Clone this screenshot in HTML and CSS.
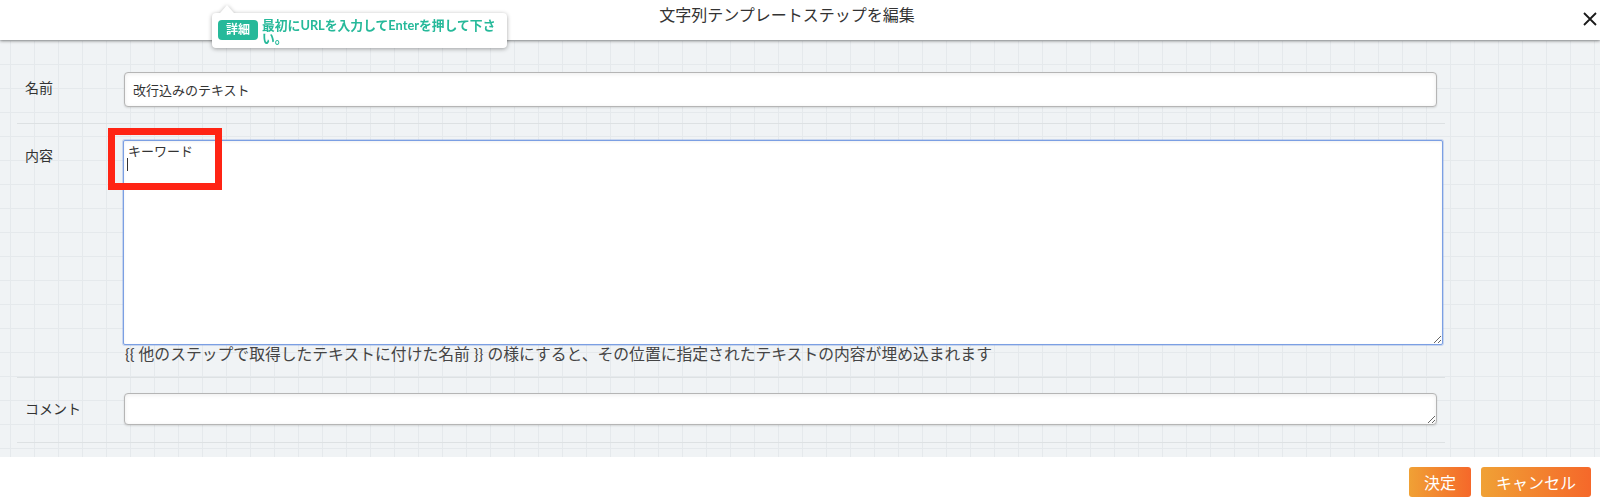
FILE: index.html
```html
<!DOCTYPE html>
<html lang="ja">
<head>
  <meta charset="UTF-8" />
  <title>文字列テンプレートステップを編集</title>
  <link rel="stylesheet" href="styles.css">
</head>
<body>
  <!-- Dialog header -->
  <header class="dialog-header">
    <div class="dialog-title">文字列テンプレートステップを編集</div>
    <button type="button" class="close-button">
      <svg width="14" height="14" viewBox="0 0 14 14"><path d="M1 1L13 13M13 1L1 13" stroke="#1a1a1a" stroke-width="1.8" fill="none"/></svg>
    </button>
  </header>

  <!-- Hint bubble -->
  <div class="tip">
    <span class="tip-badge">詳細</span>
    <span class="tip-text">最初にURLを入力してEnterを押して下さ<br>い。</span>
  </div>

  <!-- Form body -->
  <main class="dialog-body">
    <div class="form">
      <div class="form-row row-name">
        <label class="form-label">名前</label>
        <div class="form-field">
          <input type="text" class="form-control" value="改行込みのテキスト">
        </div>
      </div>

      <div class="form-row row-content">
        <label class="form-label">内容</label>
        <div class="form-field">
          <div class="area-wrap">
            <textarea class="form-area focused">キーワード
</textarea>
            <span class="caret"></span>
            <span class="mark"></span>
          </div>
          <p class="help">{{ 他のステップで取得したテキストに付けた名前 }} の様にすると、その位置に指定されたテキストの内容が埋め込まれます</p>
        </div>
      </div>

      <div class="form-row row-comment">
        <label class="form-label">コメント</label>
        <div class="form-field">
          <textarea class="form-area comment"></textarea>
        </div>
      </div>
    </div>
  </main>

  <!-- Footer buttons -->
  <footer class="dialog-footer">
    <button type="button" class="btn">決定</button>
    <button type="button" class="btn">キャンセル</button>
  </footer>
</body>
</html>
```

FILE: styles.css
```css
/* Base */
* {
  margin: 0;
  padding: 0;
  box-sizing: border-box;
}

body {
  width: 1600px;
  height: 501px;
  overflow: hidden;
  background-color: #fff;
  color: #333;
  font-family: "Lato", "Noto Sans CJK JP", sans-serif;
  position: relative;
}

/* Header */
.dialog-header {
  height: 40px;
  display: flex;
  align-items: flex-start;
  background-color: #fff;
  box-shadow: 0 1px 3px rgba(0, 0, 0, 0.45);
  position: relative;
  z-index: 2;
}

.dialog-title {
  flex: 1;
  text-align: center;
  font-size: 16px;
  line-height: 18px;
  padding-top: 6px;
  color: #333;
}

.close-button {
  width: 26px;
  height: 40px;
  border: none;
  background: none;
  display: flex;
  align-items: flex-start;
  padding: 12px 0 0 9px;
  cursor: pointer;
}

/* Hint bubble */
.tip {
  position: absolute;
  left: 212px;
  top: 13px;
  width: 295px;
  height: 35px;
  background-color: #fff;
  border-radius: 4px;
  display: flex;
  align-items: flex-start;
  gap: 4px;
  padding: 6px 6px 0;
  filter: drop-shadow(0 1px 2px rgba(0, 0, 0, 0.35));
  z-index: 5;
}

.tip::before {
  content: "";
  position: absolute;
  left: 8px;
  top: -8px;
  border-left: 7px solid transparent;
  border-right: 7px solid transparent;
  border-bottom: 8px solid #fff;
}

.tip-badge {
  margin-top: 1px;
  width: 40px;
  height: 20px;
  border-radius: 4px;
  background-color: #26b99a;
  color: #fff;
  font-size: 12px;
  font-weight: bold;
  line-height: 20px;
  text-align: center;
}

.tip-text {
  color: #26b99a;
  font-size: 12.8px;
  font-weight: bold;
  line-height: 13px;
  white-space: nowrap;
}

/* Grid body */
.dialog-body {
  height: 417px;
  background-color: #f0f3f5;
  background-image:
    linear-gradient(to right, #e5e9ec 1px, transparent 1px),
    linear-gradient(to bottom, #e5e9ec 1px, transparent 1px);
  background-size: 24px 24px;
  background-position: 10px 0;
}

.form {
  width: 1428px;
  margin-left: 17px;
}

.form-row {
  display: flex;
  padding-left: 8px;
  border-bottom: 1px solid #dde1e3;
}

.row-name {
  padding-top: 32px;
  padding-bottom: 16px;
}

.row-content {
  padding-top: 16px;
  padding-bottom: 15px;
}

.row-comment {
  padding-top: 15px;
  padding-bottom: 17px;
}

.form-label {
  width: 99px;
  flex-shrink: 0;
  font-size: 14px;
  line-height: 20px;
  padding-top: 6px;
  color: #333;
}

.form-field {
  flex: 1;
}

.form-control {
  display: block;
  width: 1313px;
  height: 35px;
  padding: 0 8px;
  border: 1px solid #b5b5b5;
  border-radius: 4px;
  background-color: #fff;
  box-shadow: inset 0 1px 4px rgba(0, 0, 0, 0.08), 0 1px 2px rgba(0, 0, 0, 0.12);
  font-family: "Lato", "Noto Sans CJK JP", sans-serif;
  font-size: 13px;
  color: #333;
  outline: none;
}

.area-wrap {
  position: relative;
  margin-left: -1px;
}

.form-area {
  display: block;
  border: 1px solid #b5b5b5;
  border-radius: 4px;
  background-color: #fff;
  box-shadow: inset 0 1px 4px rgba(0, 0, 0, 0.08), 0 1px 2px rgba(0, 0, 0, 0.12);
  font-family: "Lato", "Noto Sans CJK JP", sans-serif;
  font-size: 13px;
  line-height: 16px;
  color: #333;
  padding: 2px 4px;
  outline: none;
}

.form-area.focused {
  width: 1320px;
  height: 205px;
  border-color: #7b9fe3;
  border-radius: 2px;
  box-shadow: 0 0 0 1px rgba(123, 159, 227, 0.35), inset 0 1px 3px rgba(0, 0, 0, 0.06);
}

.form-area.comment {
  width: 1313px;
  height: 32px;
}

/* Text caret inside the focused area */
.caret {
  position: absolute;
  left: 4px;
  top: 18px;
  width: 1px;
  height: 13px;
  background-color: #333;
}

/* Red annotation box */
.mark {
  position: absolute;
  left: -15px;
  top: -12px;
  width: 114px;
  height: 62px;
  border: 7px solid #ff2414;
}

.help {
  font-size: 15.8px;
  line-height: 17px;
  color: #444;
  padding-left: 1px;
}

/* Footer */
.dialog-footer {
  display: flex;
  justify-content: flex-end;
  gap: 10px;
  padding: 10px 9px 0;
}

.btn {
  height: 30px;
  padding: 0 15px;
  border: none;
  border-radius: 3px;
  background: linear-gradient(to right, #f0a135, #f5682a);
  color: #fff;
  font-family: "Lato", "Noto Sans CJK JP", sans-serif;
  font-size: 16px;
  cursor: pointer;
}
```
